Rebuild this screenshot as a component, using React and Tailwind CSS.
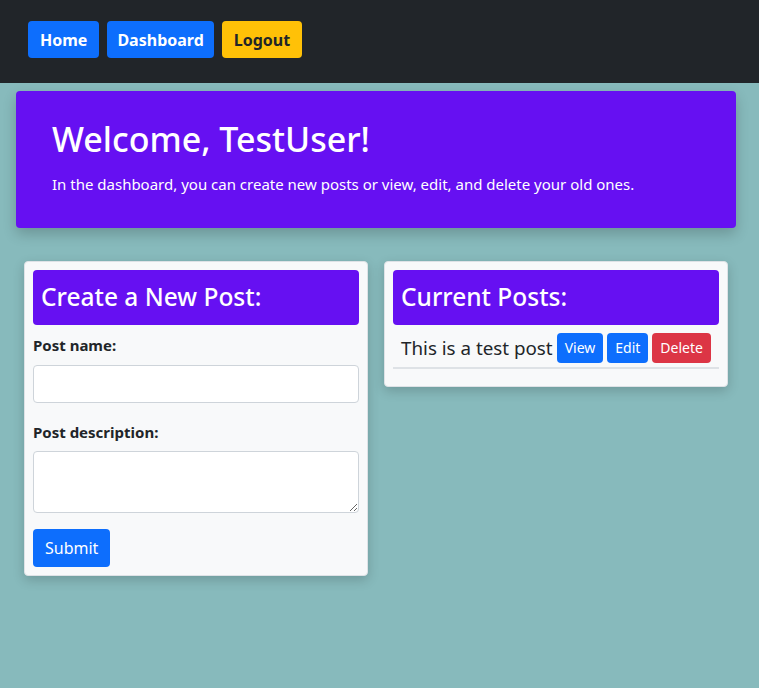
import React from 'react';

// ─── Nav ──────────────────────────────────────────────────────────────────────
function Nav() {
    return (
        <nav className="bg-[#212529] h-[83px] flex items-start pt-[21px] pl-[28px] gap-2">
            <button className="h-[37px] px-3 rounded bg-[#0d6efd] text-white font-bold">Home</button>
            <button className="h-[37px] px-[10px] rounded bg-[#0d6efd] text-white font-bold">Dashboard</button>
            <button className="h-[37px] px-3 rounded bg-[#ffc107] text-[#212529] font-bold">Logout</button>
        </nav>
    );
}

// ─── Carte ────────────────────────────────────────────────────────────────────
function Card({ title, children }) {
    return (
        <div className="w-[344px] bg-[#f8f9fa] border border-[#dee2e6] rounded shadow-[0_4px_12px_rgba(0,0,0,0.18)] p-2">
            <div className="bg-[#6610f2] rounded h-[55px] flex items-center px-2">
                <h2 className="text-white text-[24.5px] font-medium">{title}</h2>
            </div>
            {children}
        </div>
    );
}

export default function App() {
    return (
        <div className="min-h-[688px] bg-[#87babc] text-[#212529]" style={{ fontFamily: '"Noto Sans", sans-serif' }}>
            <Nav />
            <div className="pt-2 px-4">
                <div className="w-[720px] bg-[#6610f2] rounded shadow-[0_6px_14px_rgba(0,0,0,0.2)] h-[137px] px-9 pt-[22px] text-white">
                    <h1 className="text-[34px] leading-[52px] font-medium">Welcome, TestUser!</h1>
                    <p className="mt-2 text-[15px]">In the dashboard, you can create new posts or view, edit, and delete your old ones.</p>
                </div>
            </div>
            <div className="flex items-start gap-4 px-6 mt-[33px]">
                <Card title="Create a New Post:">
                    <label className="block font-bold text-[15px] mt-[9px]">Post name:</label>
                    <input className="block w-full h-[38px] mt-[8px] bg-white border border-[#ced4da] rounded" />
                    <label className="block font-bold text-[15px] mt-[18px]">Post description:</label>
                    <textarea className="block w-full h-[62px] mt-[8px] bg-white border border-[#ced4da] rounded" />
                    <button className="mt-4 h-[38px] px-3 rounded bg-[#0d6efd] text-white">Submit</button>
                </Card>
                <Card title="Current Posts:">
                    <div className="flex items-center gap-1 mt-2 pl-2 pb-[4px] border-b-2 border-[#dee2e6]">
                        <span className="text-[18.8px]">This is a test post</span>
                        <button className="h-[30px] px-2 rounded bg-[#0d6efd] text-white text-sm">View</button>
                        <button className="h-[30px] px-2 rounded bg-[#0d6efd] text-white text-sm">Edit</button>
                        <button className="h-[30px] px-2 rounded bg-[#dc3545] text-white text-sm">Delete</button>
                    </div>
                    <div className="h-[9px]" />
                </Card>
            </div>
        </div>
    );
}
